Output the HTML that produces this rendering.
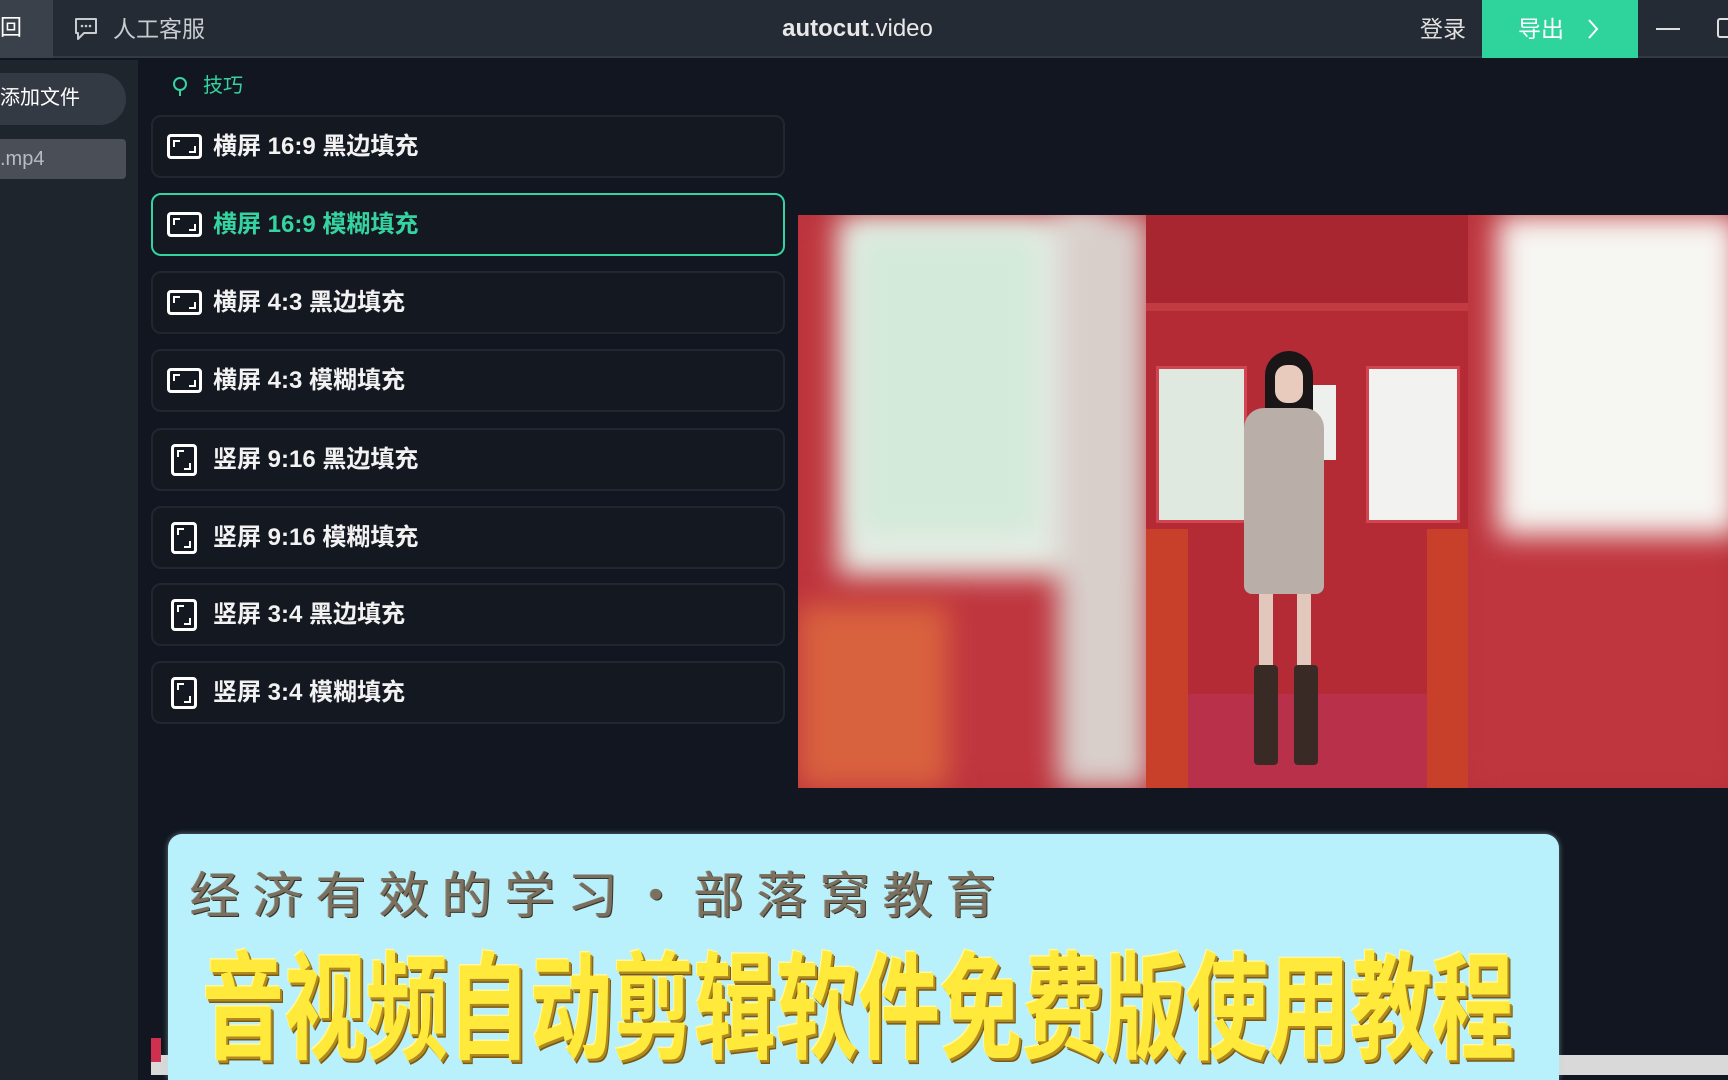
<!DOCTYPE html>
<html><head><meta charset="utf-8"><style>
*{margin:0;padding:0;box-sizing:border-box}
body{width:1728px;height:1080px;overflow:hidden;background:#111620;font-family:"Liberation Sans","Noto Sans CJK SC",sans-serif;position:relative;color:#fff}
.abs{position:absolute}
.top{left:0;top:0;width:1728px;height:58px;background:#252b34;border-bottom:2px solid #333a44}
.side{left:0;top:60px;width:138px;height:1020px;background:#1f252d}
.item{position:absolute;left:151px;width:634px;height:63px;background:#141821;border:2px solid #22272f;border-radius:10px;font-weight:bold;font-size:24px;line-height:59px;padding-left:60px;color:#f2f2f2;font-family:"Liberation Sans","Noto Sans CJK SC",sans-serif}
.item.sel{border-color:#35d3a0;color:#35d3a0}
.ic{position:absolute;left:14px;top:17px;width:35px;height:25px;border:3px solid #fff;border-radius:4px}
.ic.v{left:18px;top:14px;width:26px;height:32px}
.ic:before{content:"";position:absolute;left:3px;top:3px;width:5px;height:5px;border-left:2px solid #fff;border-top:2px solid #fff}
.ic:after{content:"";position:absolute;right:3px;bottom:3px;width:5px;height:5px;border-right:2px solid #fff;border-bottom:2px solid #fff}
.blur{filter:blur(14px)}
</style></head><body>
<div class="abs top"></div>
<div class="abs" style="left:0;top:0;width:53px;height:58px;background:#3b414a"></div>
<div class="abs" style="left:0;top:14px;font-size:22px;line-height:28px">回</div>
<svg class="abs" style="left:72px;top:15px" width="28" height="28" viewBox="0 0 28 28"><path d="M4 4h20v14H12l-6 6v-6H4z" fill="none" stroke="#c8cbd0" stroke-width="2" stroke-linejoin="round"/><circle cx="10" cy="11" r="1.3" fill="#c8cbd0"/><circle cx="14" cy="11" r="1.3" fill="#c8cbd0"/><circle cx="18" cy="11" r="1.3" fill="#c8cbd0"/></svg>
<div class="abs" style="left:113px;top:14px;font-size:23px;color:#c8cbd0;line-height:30px">人工客服</div>
<div class="abs" style="left:0;width:1715px;top:14px;text-align:center;font-size:24px;line-height:30px;color:#e8e8e8"><b>autocut</b>.video</div>
<div class="abs" style="left:1420px;top:14px;font-size:23px;line-height:30px;color:#e0e0e0">登录</div>
<div class="abs" style="left:1482px;top:0;width:156px;height:58px;background:#2fd39c"></div>
<div class="abs" style="left:1518px;top:14px;font-size:23px;line-height:30px;color:#fff">导出</div>
<svg class="abs" style="left:1585px;top:17px" width="16" height="24"><path d="M4 3l8 9-8 9" fill="none" stroke="#fff" stroke-width="2"/></svg>
<div class="abs" style="left:1656px;top:28px;width:24px;height:2px;background:#ddd"></div>
<div class="abs" style="left:1717px;top:18px;width:16px;height:20px;border:2px solid #ddd;border-radius:3px"></div>

<div class="abs side"></div>
<div class="abs" style="left:-30px;top:73px;width:156px;height:52px;background:#343a43;border-radius:26px"></div>
<div class="abs" style="left:0;top:85px;font-size:20px;line-height:26px;color:#fff">添加文件</div>
<div class="abs" style="left:0;top:139px;width:126px;height:40px;background:#4a4f57;border-radius:0 4px 4px 0"></div>
<div class="abs" style="left:0;top:146px;font-size:20px;line-height:26px;color:#b8bcc2">.mp4</div>

<svg class="abs" style="left:170px;top:75px" width="22" height="24"><circle cx="10" cy="9" r="6" fill="none" stroke="#35d3a0" stroke-width="2"/><path d="M10 15v6" stroke="#35d3a0" stroke-width="2"/></svg>
<div class="abs" style="left:203px;top:73px;font-size:20px;line-height:26px;color:#35d3a0">技巧</div>

<div class="item" style="top:115px"><span class="ic"></span>横屏 16:9 黑边填充</div>
<div class="item sel" style="top:193px"><span class="ic"></span>横屏 16:9 模糊填充</div>
<div class="item" style="top:271px"><span class="ic"></span>横屏 4:3 黑边填充</div>
<div class="item" style="top:349px"><span class="ic"></span>横屏 4:3 模糊填充</div>
<div class="item" style="top:428px"><span class="ic v"></span>竖屏 9:16 黑边填充</div>
<div class="item" style="top:506px"><span class="ic v"></span>竖屏 9:16 模糊填充</div>
<div class="item" style="top:583px"><span class="ic v"></span>竖屏 3:4 黑边填充</div>
<div class="item" style="top:661px"><span class="ic v"></span>竖屏 3:4 模糊填充</div>

<!-- video -->
<div class="abs" style="left:798px;top:215px;width:930px;height:573px;overflow:hidden;background:#b8343c">
  <div class="abs blur" style="left:0;top:0;width:348px;height:573px;background:#c0363f"></div>
  <div class="abs blur" style="left:40px;top:0;width:270px;height:360px;background:#e6eee6"></div>
  <div class="abs blur" style="left:60px;top:20px;width:180px;height:300px;background:#d3e9d9"></div>
  <div class="abs blur" style="left:0;top:390px;width:150px;height:183px;background:#d9623e"></div>
  <div class="abs blur" style="left:260px;top:0;width:90px;height:573px;background:#d8cfcb"></div>
  <div class="abs blur" style="left:670px;top:0;width:260px;height:573px;background:#c0363f"></div>
  <div class="abs blur" style="left:700px;top:0;width:240px;height:320px;background:#f6f6f2"></div>
  <div class="abs" style="left:348px;top:0;width:322px;height:573px;background:#b52b35;overflow:hidden">
    <div class="abs" style="left:0;top:0;width:322px;height:95px;background:#a82630"></div>
    <div class="abs" style="left:0;top:88px;width:322px;height:8px;background:#c23a42"></div>
    <div class="abs" style="left:10px;top:151px;width:91px;height:157px;background:#dfe9df;border:3px solid #d04550"></div>
    <div class="abs" style="left:165px;top:170px;width:25px;height:75px;background:#eef0ee"></div>
    <div class="abs" style="left:220px;top:151px;width:94px;height:157px;background:#f2f3f0;border:3px solid #d04550"></div>
    <div class="abs" style="left:0;top:314px;width:42px;height:259px;background:#c9402a"></div>
    <div class="abs" style="left:281px;top:314px;width:41px;height:259px;background:#c9402a"></div>
    <div class="abs" style="left:42px;top:479px;width:239px;height:94px;background:#b8304a"></div>
    <div class="abs" style="left:119px;top:136px;width:48px;height:70px;background:#1a1618;border-radius:24px 24px 6px 6px"></div>
    <div class="abs" style="left:129px;top:150px;width:28px;height:38px;background:#e8cbbd;border-radius:12px"></div>
    <div class="abs" style="left:98px;top:193px;width:80px;height:186px;background:#b9aea8;border-radius:20px 20px 8px 8px"></div>
    <div class="abs" style="left:113px;top:379px;width:14px;height:75px;background:#e2c7bd"></div>
    <div class="abs" style="left:151px;top:379px;width:14px;height:75px;background:#e2c7bd"></div>
    <div class="abs" style="left:108px;top:450px;width:24px;height:100px;background:#3a2a26;border-radius:4px"></div>
    <div class="abs" style="left:148px;top:450px;width:24px;height:100px;background:#3a2a26;border-radius:4px"></div>
  </div>
</div>

<div class="abs" style="left:151px;top:1055px;width:1577px;height:20px;background:#d9d9d9"></div>
<div class="abs" style="left:151px;top:1038px;width:10px;height:24px;background:#d03050"></div>
<div class="abs" style="left:168px;top:834px;width:1391px;height:246px;background:#b8f0fb;border-radius:14px 14px 0 0;box-shadow:0 0 6px rgba(180,220,230,.5)"></div>
<div class="abs" style="left:190px;top:864px;font-size:50px;line-height:64px;letter-spacing:13px;color:#7a7060;text-shadow:1px 1px 0 #3a342a,-1px 0 0 #9a9080">经济有效的学习・部落窝教育</div>
<div class="abs" style="left:202px;top:950px;font-size:82px;line-height:86px;letter-spacing:0px;color:#ffe93a;font-weight:bold;transform:scaleY(1.42);transform-origin:top left;text-shadow:2px 2px 0 #b08a20,3px 3px 0 #7a5a10,-1px -1px 0 #fff8a0">音视频自动剪辑软件免费版使用教程</div>
</body></html>
